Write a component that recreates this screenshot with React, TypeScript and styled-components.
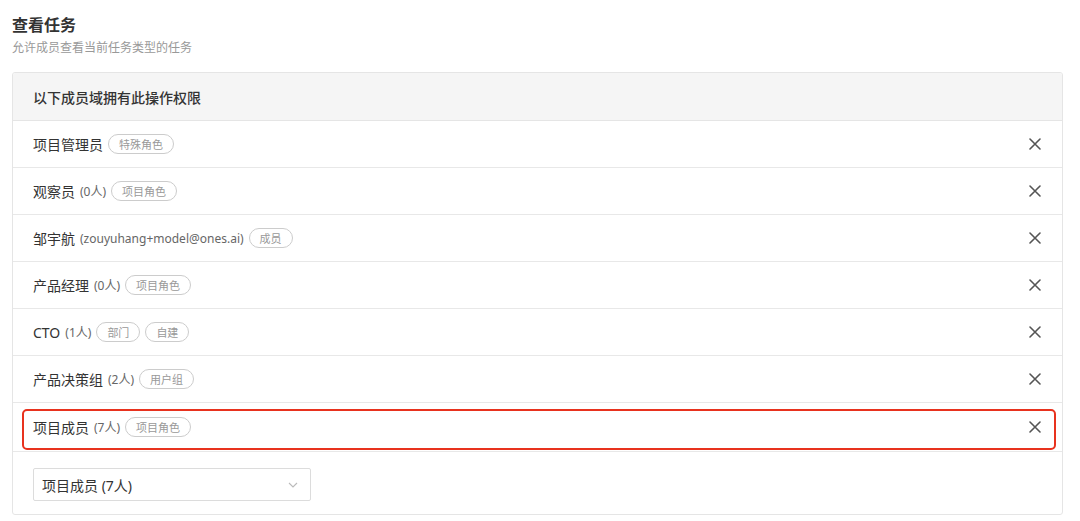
import styled, { createGlobalStyle } from 'styled-components';

interface IMember {
  name: string;
  count?: string;
  tags: string[];
  highlight?: boolean;
}

const members: IMember[] = [
  { name: '项目管理员', tags: ['特殊角色'] },
  { name: '观察员', count: '(0人)', tags: ['项目角色'] },
  { name: '邹宇航', count: '(zouyuhang+model@ones.ai)', tags: ['成员'] },
  { name: '产品经理', count: '(0人)', tags: ['项目角色'] },
  { name: 'CTO', count: '(1人)', tags: ['部门', '自建'] },
  { name: '产品决策组', count: '(2人)', tags: ['用户组'] },
  { name: '项目成员', count: '(7人)', tags: ['项目角色'], highlight: true },
];

const GlobalStyle = createGlobalStyle`
  body {
    margin: 0;
    background: #fff;
    font-family: "Noto Sans", "Noto Sans CJK SC", sans-serif;
    color: #333;
  }
`;

function CloseIcon() {
  return (
    <svg width="12" height="12" viewBox="0 0 12 12">
      <path d="M1 1L11 11M11 1L1 11" stroke="#555" strokeWidth="1.6" strokeLinecap="round" />
    </svg>
  );
}

function Chevron() {
  return (
    <svg width="10" height="6" viewBox="0 0 10 6">
      <path d="M1 1L5 5L9 1" stroke="#bbb" strokeWidth="1.1" fill="none" />
    </svg>
  );
}

export default function App() {
  return (
    <S.Page>
      <GlobalStyle />
      <S.Title>查看任务</S.Title>
      <S.Subtitle>允许成员查看当前任务类型的任务</S.Subtitle>
      <S.Panel>
        <S.Header>以下成员域拥有此操作权限</S.Header>
        {members.map((m) => (
          <S.Row key={m.name} $tall={m.highlight}>
            <S.Name>{m.name}</S.Name>
            {m.count && <S.Count>{m.count}</S.Count>}
            {m.tags.map((t) => (
              <S.Tag key={t}>{t}</S.Tag>
            ))}
            <S.Remove>
              <CloseIcon />
            </S.Remove>
            {m.highlight && <S.Highlight />}
          </S.Row>
        ))}
        <S.Footer>
          <S.Select>
            <span>项目成员 (7人)</span>
            <Chevron />
          </S.Select>
        </S.Footer>
      </S.Panel>
    </S.Page>
  );
}

const S = {
  Page: styled.div`
    padding: 14px 17px 0 12px;
  `,
  Title: styled.h2`
    margin: 0;
    font-size: 16px;
    line-height: 22px;
    font-weight: 700;
    color: #333;
  `,
  Subtitle: styled.p`
    margin: 3px 0 0;
    font-size: 12px;
    line-height: 18px;
    color: #999;
  `,
  Panel: styled.div`
    margin-top: 15px;
    border: 1px solid #e5e5e5;
    border-radius: 3px;
    overflow: hidden;
  `,
  Header: styled.div`
    display: flex;
    align-items: center;
    height: 47px;
    padding: 0 20px;
    background: #f5f5f5;
    border-bottom: 1px solid #e5e5e5;
    font-size: 14px;
    font-weight: 500;
    color: #333;
  `,
  Row: styled.div<{ $tall?: boolean }>`
    position: relative;
    display: flex;
    align-items: center;
    gap: 5px;
    height: ${(p) => (p.$tall ? 48 : 46)}px;
    padding: 0 20px;
    border-bottom: 1px solid #e8e8e8;
  `,
  Name: styled.span`
    font-size: 14px;
    color: #333;
  `,
  Count: styled.span`
    font-size: 12px;
    color: #666;
  `,
  Tag: styled.span`
    display: inline-flex;
    align-items: center;
    height: 18px;
    padding: 0 10px;
    border: 1px solid #ccc;
    border-radius: 10px;
    font-size: 11px;
    color: #999;
  `,
  Remove: styled.span`
    display: flex;
    margin-left: auto;
    margin-right: 1px;
  `,
  Highlight: styled.div`
    position: absolute;
    left: 9px;
    right: 6px;
    top: 6px;
    bottom: 1px;
    border: 2.5px solid #e8321e;
    border-radius: 5px;
    pointer-events: none;
  `,
  Footer: styled.div`
    padding: 16px 20px 13px;
  `,
  Select: styled.div`
    display: flex;
    align-items: center;
    justify-content: space-between;
    box-sizing: border-box;
    width: 278px;
    height: 33px;
    padding: 0 12px 0 8px;
    border: 1px solid #dcdcdc;
    border-radius: 2px;
    font-size: 14px;
    color: #333;
  `,
};
